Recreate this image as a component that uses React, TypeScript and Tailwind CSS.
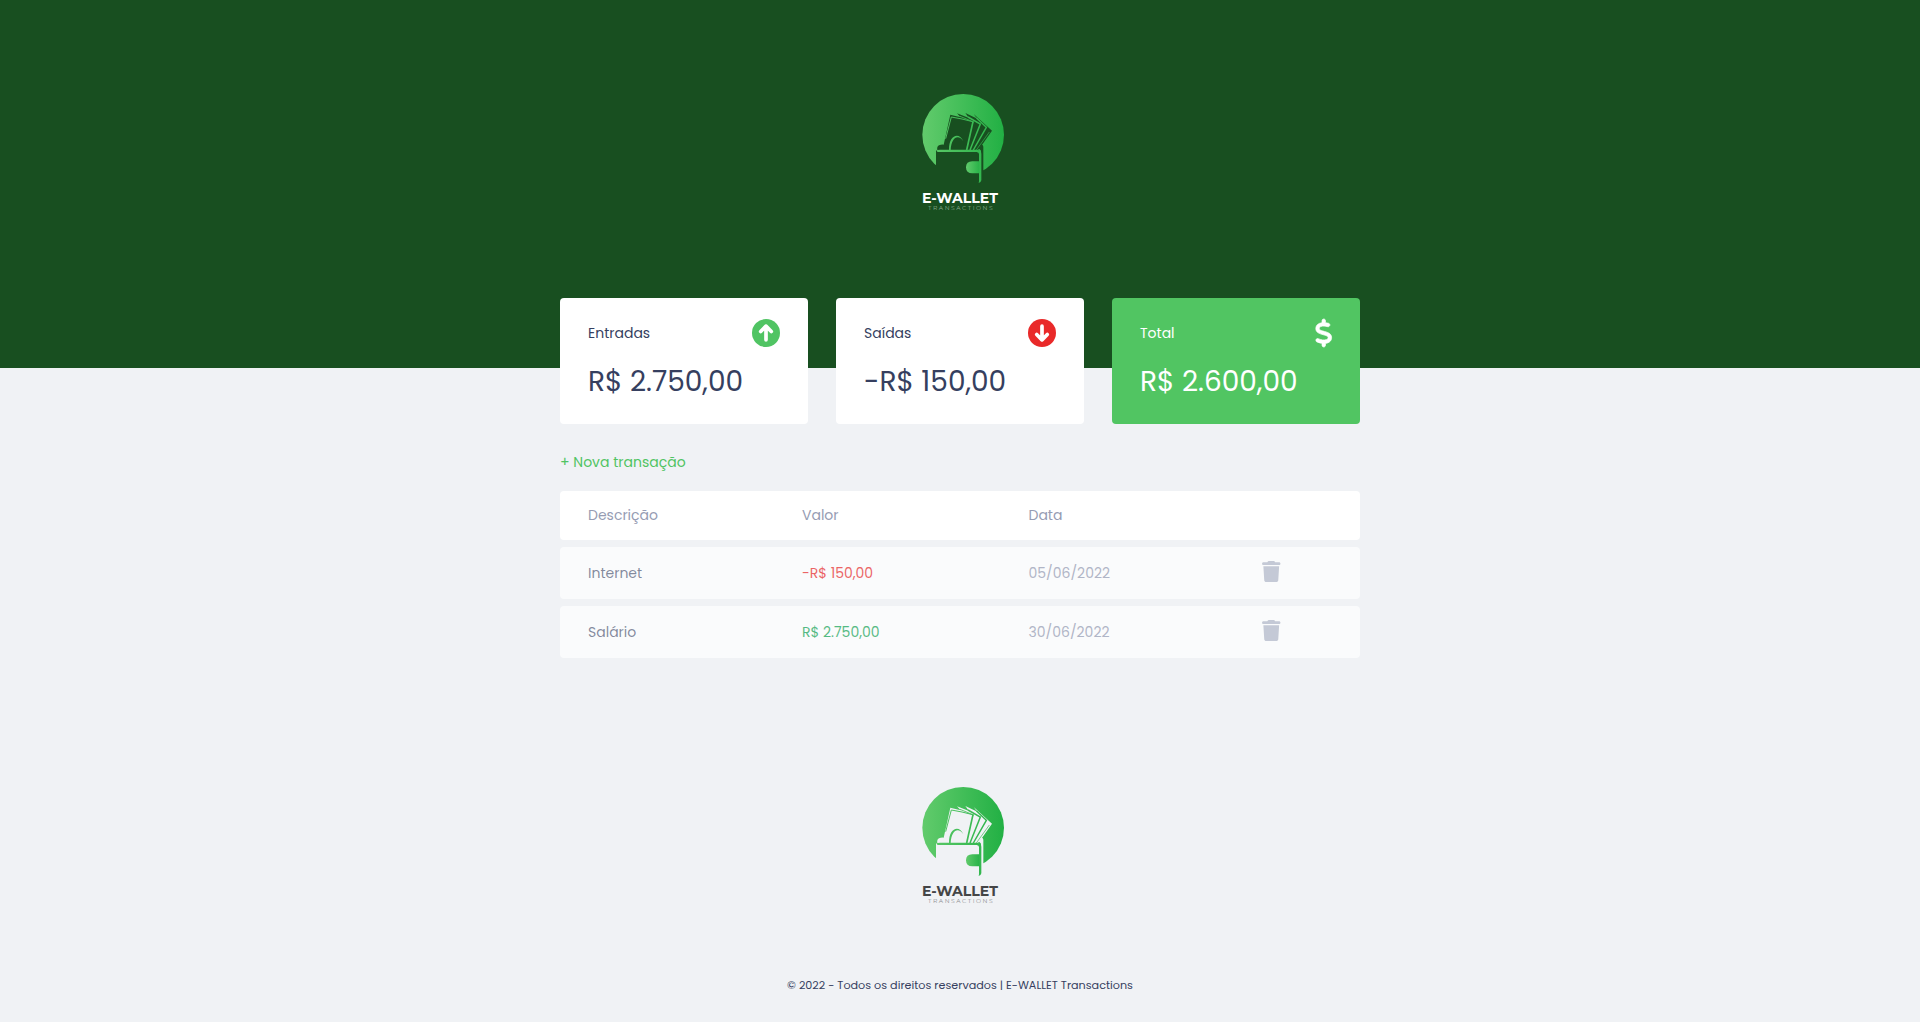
import { FaDollarSign, FaTrash } from 'react-icons/fa6';

function Logo({ id, surface, title, subtitle }: { id: string; surface: string; title: string; subtitle: string }) {
  const g = `url(#${id})`;
  return (
    <svg viewBox="0 0 375 420" className="block h-[140px] w-[125px]" role="img" aria-label="E-Wallet Transactions">
      <defs>
        <linearGradient id={id} gradientUnits="userSpaceOnUse" x1="66" y1="0" x2="312" y2="0">
          <stop offset="0" stopColor="#62cb6c" />
          <stop offset="1" stopColor="#22b044" />
        </linearGradient>
        <linearGradient id={`${id}-clasp`} gradientUnits="userSpaceOnUse" x1="197" y1="0" x2="243" y2="0">
          <stop offset="0" stopColor="#62cb6c" />
          <stop offset="1" stopColor="#22b044" />
        </linearGradient>
      </defs>
      <circle cx="189.5" cy="164.5" r="122.5" fill={g} />
      {/* wallet and banknotes cut out of the disc */}
      <g fill={surface}>
        <path d="M108 210 H237 V300 H108 Z" />
        <path d="M243 214 V196 Q249 192 250 200 V300 H240 Z" />
        <path d="M151 104 L182 112 L171 100 L207 114 L196 99 L232 116 L221 102 L276 152 L238 206 L233 210 H112 Q110 200 117 196 Q124 193 131 194 Z" />
        <path d="M236 205 L246 194 L249 202 L244 213 Z" />
      </g>
      {/* edges of the banknotes */}
      <g fill="none" stroke={g} strokeWidth="3.6">
        <path d="M137 176 L154 111 L186 117 L222 126" strokeWidth="3" />
        <path d="M219 125 L200 210" strokeWidth="5" />
        <path d="M180 109 L216 124" strokeWidth="2.5" />
        <path d="M204 111 L241 132 L210 210" strokeWidth="4.5" />
        <path d="M229 113 L259 142 L220 210" strokeWidth="4.5" />
        <path d="M268 156 L229 210" strokeWidth="2" />
      </g>
      <path d="M147 210 C146 163 179 155 190 184 C177 162 154 168 152 210 Z" fill={g} />
      <path d="M108 211 Q112 209 120 209 H232 Q244 210 244 222 V301 Q243 308 236 309 L237 304 V222 Q237 217 230 216 H113 Z" fill={g} />
      <path d="M238 244 H217 Q198 244 198 262 Q198 280 217 280 H238 Z" fill={`url(#${id}-clasp)`} />
      <text x="66" y="367.5" textLength="228" lengthAdjust="spacingAndGlyphs" className={title} fontFamily="Montserrat, Poppins, sans-serif" fontWeight="700" fontSize="43">
        E-WALLET
      </text>
      <text x="84" y="388.5" textLength="194" lengthAdjust="spacing" className={subtitle} fontFamily="Montserrat, Poppins, sans-serif" fontWeight="400" fontSize="18">
        TRANSACTIONS
      </text>
    </svg>
  );
}

function ArrowCircle({ down = false, className }: { down?: boolean; className: string }) {
  return (
    <svg viewBox="0 0 28 28" className={className}>
      <circle cx="14" cy="14" r="14" fill="currentColor" />
      <path
        d={down ? 'M14 7.2V20.8M8.7 15.5L14 20.9L19.3 15.5' : 'M14 20.8V7.2M8.7 12.5L14 7.1L19.3 12.5'}
        fill="none"
        stroke="white"
        strokeWidth="3.7"
        strokeLinecap="round"
        strokeLinejoin="round"
      />
    </svg>
  );
}

const rows = [
  { name: 'Internet', value: '-R$ 150,00', date: '05/06/2022', tone: 'text-[#e92929]' },
  { name: 'Salário', value: 'R$ 2.750,00', date: '30/06/2022', tone: 'text-[#12a454]' },
];

export default function App() {
  return (
    <div className="flex h-[1022px] flex-col overflow-hidden bg-[#f0f2f5] font-['Poppins','Inter',sans-serif] text-sm text-[#363f5f]">
      <header className="flex h-[368px] shrink-0 justify-center bg-[#184f20] pt-20">
        <div className="ml-[5px] h-[140px]">
          <Logo id="logo-top" surface="#184f20" title="fill-white" subtitle="fill-[#8fae91]" />
        </div>
      </header>

      <main className="relative mx-auto -mt-[70px] w-[800px] shrink-0">
        <section className="grid grid-cols-3 gap-7">
          <div className="h-[126px] rounded bg-white px-7 pt-[21px]">
            <h3 className="flex h-7 items-center justify-between">
              Entradas
              <ArrowCircle className="size-7 text-[#50c463]" />
            </h3>
            <p className="mt-[14px] text-[28px] leading-[42px]">R$ 2.750,00</p>
          </div>
          <div className="h-[126px] rounded bg-white px-7 pt-[21px]">
            <h3 className="flex h-7 items-center justify-between">
              Saídas
              <ArrowCircle down className="size-7 text-[#e92929]" />
            </h3>
            <p className="mt-[14px] text-[28px] leading-[42px]">-R$ 150,00</p>
          </div>
          <div className="h-[126px] rounded bg-[#51c562] px-7 pt-[21px] text-white">
            <h3 className="flex h-7 items-center justify-between">
              Total
              <FaDollarSign className="h-7 w-[17.5px] overflow-visible stroke-current stroke-[12]" />
            </h3>
            <p className="mt-[14px] text-[28px] leading-[42px]">R$ 2.600,00</p>
          </div>
        </section>

        <a href="#" className="mt-7 block h-5 w-fit leading-5 text-[#50c463]">+ Nova transação</a>

        <section className="mt-[19px] flex flex-col gap-[7px]">
          <div className="grid h-[49px] grid-cols-[214px_226.5px_233.5px_1fr] items-center rounded bg-white pb-px pl-7 text-[#969cb3]">
            <span>Descrição</span>
            <span>Valor</span>
            <span>Data</span>
          </div>
          {rows.map((r) => (
            <div key={r.name} className="grid h-13 grid-cols-[214px_226.5px_233.5px_1fr] items-center rounded bg-white pl-7 opacity-70">
              <span className="text-[#363f5f]/85">{r.name}</span>
              <span className={r.tone}>{r.value}</span>
              <span className="text-[#969cb3]">{r.date}</span>
              <FaTrash className="mb-[3px] h-[21px] w-[18.5px] text-[#b2b9c9]" />
            </div>
          ))}
        </section>
      </main>

      <footer className="mt-[115px] flex flex-col items-center">
        <div className="ml-[5px] h-[140px]">
          <Logo id="logo-bottom" surface="#f0f2f5" title="fill-[#444546]" subtitle="fill-[#8c8d8f]" />
        </div>
        <p className="mt-16 text-[11.2px] leading-4">© 2022 - Todos os direitos reservados | E-WALLET Transactions</p>
      </footer>
    </div>
  );
}
